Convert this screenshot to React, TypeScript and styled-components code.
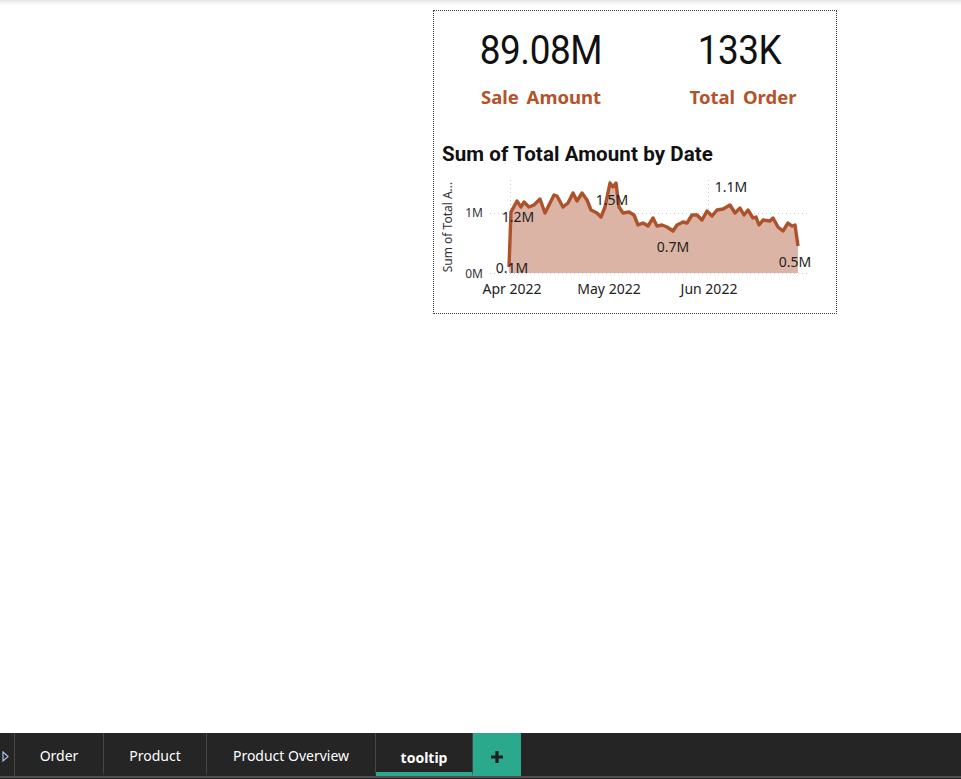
import React from "react";
import styled, { createGlobalStyle } from "styled-components";

const Global = createGlobalStyle`
  html, body { margin: 0; padding: 0; background: #fff; overflow: hidden; }
  #root { height: 100vh; }
`;

const Page = styled.div`
  height: 100vh;
  display: flex;
  flex-direction: column;
`;

const Canvas = styled.main`
  flex: 1;
  background: linear-gradient(#e4e4e4 0px, #f6f6f6 3px, #ffffff 6px);
  padding: 10px 0 0 433px;
`;

const Card = styled.section`
  width: 402px;
  height: 302px;
  border: 1px dotted #3c3c3c;
  display: flex;
  flex-direction: column;
`;

const KpiRow = styled.div`
  display: grid;
  grid-template-columns: 202px 202px;
  margin-left: 6px;
  padding-top: 14px;
`;

const Kpi = styled.div`
  display: flex;
  flex-direction: column;
  align-items: center;
`;

const KpiValue = styled.div<{ $shift?: number }>`
  font-family: Roboto, "DejaVu Sans", sans-serif;
  font-size: 41px;
  line-height: 50px;
  color: #111;
  letter-spacing: -0.5px;
  transform: translateX(${(p) => p.$shift ?? 0}px) scaleX(0.9);
`;

const KpiLabel = styled.div`
  font-family: "Noto Sans", "Open Sans", sans-serif;
  font-weight: 700;
  font-size: 18.5px;
  line-height: 24px;
  margin-top: 10px;
  color: #b3532a;
  word-spacing: 3px;
`;

const ChartTitle = styled.h2`
  margin: 33px 0 0 8px;
  font-family: Roboto, "DejaVu Sans", sans-serif;
  font-weight: 700;
  font-size: 20.5px;
  line-height: 24px;
  color: #111;
  letter-spacing: 0.1px;
`;

const ChartSvg = styled.svg`
  display: block;
  margin-top: 4px;
  font-family: "Noto Sans", "Open Sans", sans-serif;
`;

const Bar = styled.footer`
  height: 46px;
  background: #252525;
  display: flex;
  flex-direction: column;
`;

const TabRow = styled.div`
  height: 43px;
  display: flex;
`;

const BarLine = styled.div`
  height: 2px;
  background: #4f4f4f;
`;

const ArrowCell = styled.div`
  width: 15px;
  border-right: 1px solid #454545;
  display: flex;
  align-items: center;
  padding: 3px 0 0 2px;
  box-sizing: border-box;
`;

const Tab = styled.div<{ $w: number; $active?: boolean }>`
  width: ${(p) => p.$w}px;
  box-sizing: border-box;
  border-right: 1px solid #454545;
  display: flex;
  align-items: center;
  justify-content: center;
  font-family: "Noto Sans", "Open Sans", sans-serif;
  font-size: 14px;
  font-weight: ${(p) => (p.$active ? 700 : 400)};
  color: #fff;
  border-bottom: 4px solid ${(p) => (p.$active ? "#2aa98c" : "transparent")};
  padding-top: ${(p) => (p.$active ? 9 : 5)}px;
`;

const AddTab = styled.div`
  width: 48px;
  background: #2aa98c;
  display: flex;
  align-items: center;
  justify-content: center;
  padding-top: 2px;
  margin-bottom: -2px;
`;

const pts: [number, number][] = [
  [509, 267], [511, 212], [517, 201], [521, 207], [524, 202], [529, 207], [534, 205],
  [540, 199], [545, 213], [549, 205], [554, 195], [557, 196], [563, 207], [568, 203],
  [573, 193], [577, 201], [582, 193], [587, 200], [591, 210], [597, 213], [601, 217],
  [605, 207], [610, 183], [613, 187], [616, 183], [619, 207], [623, 213], [629, 212],
  [634, 215], [638, 225], [643, 223], [648, 226], [653, 218], [657, 226], [662, 225],
  [667, 227], [673, 231], [677, 225], [683, 222], [687, 223], [692, 215], [697, 215],
  [702, 220], [707, 211], [712, 216], [717, 210], [723, 209], [730, 205], [735, 213],
  [740, 208], [744, 215], [748, 210], [753, 218], [756, 217], [759, 225], [763, 220],
  [770, 221], [773, 218], [778, 227], [783, 231], [788, 223], [792, 226], [795, 225],
  [798, 246],
];

const OX = 434;
const OY = 170;

function Chart() {
  const line = pts.map(([x, y], i) => `${i ? "L" : "M"}${x} ${y}`).join(" ");
  const area = `${line} L798 273 L509 273 Z`;
  const labels: [string, number, number][] = [
    ["1.2M", 518, 222],
    ["0.1M", 512, 273],
    ["1.5M", 612, 205],
    ["0.7M", 673, 252],
    ["1.1M", 731, 192],
    ["0.5M", 795, 267],
  ];
  return (
    <ChartSvg width={402} height={130} viewBox={`${OX} ${OY} 402 130`}>
      <g stroke="#c8c8c8" strokeWidth={1} strokeDasharray="1 3">
        <line x1={490} y1={213.5} x2={810} y2={213.5} />
        <line x1={490} y1={273.5} x2={810} y2={273.5} />
        <line x1={510.5} y1={180} x2={510.5} y2={273} />
        <line x1={609.5} y1={180} x2={609.5} y2={273} />
        <line x1={708.5} y1={180} x2={708.5} y2={273} />
      </g>
      <path d={area} fill="#dbb4a5" />
      <path d={line} fill="none" stroke="#ad522b" strokeWidth={3.4} strokeLinejoin="round" />
      <text
        x={452}
        y={227}
        fontSize={12}
        fill="#333"
        textAnchor="middle"
        transform="rotate(-90 452 227)"
      >
        Sum of Total A...
      </text>
      <g fontSize={12} fill="#333" textAnchor="end">
        <text x={483} y={217}>1M</text>
        <text x={483} y={278}>0M</text>
      </g>
      <g fontSize={14} fill="#222" textAnchor="middle">
        <text x={512} y={294}>Apr 2022</text>
        <text x={609} y={294}>May 2022</text>
        <text x={709} y={294}>Jun 2022</text>
      </g>
      <g fontSize={14} fill="#222" textAnchor="middle">
        {labels.map(([t, x, y]) => (
          <text key={t} x={x} y={y}>
            {t}
          </text>
        ))}
      </g>
    </ChartSvg>
  );
}

export default function App() {
  return (
    <Page>
      <Global />
      <Canvas>
        <Card>
          <KpiRow>
            <Kpi>
              <KpiValue>89.08M</KpiValue>
              <KpiLabel>Sale Amount</KpiLabel>
            </Kpi>
            <Kpi>
              <KpiValue $shift={-4}>133K</KpiValue>
              <KpiLabel>Total Order</KpiLabel>
            </Kpi>
          </KpiRow>
          <ChartTitle>Sum of Total Amount by Date</ChartTitle>
          <Chart />
        </Card>
      </Canvas>
      <Bar>
        <TabRow>
          <ArrowCell>
            <svg width="7" height="11" viewBox="0 0 7 11">
              <path d="M1 1 L6 5.5 L1 10 Z" fill="none" stroke="#9fc3e6" strokeWidth="1.2" />
            </svg>
          </ArrowCell>
          <Tab $w={89}>Order</Tab>
          <Tab $w={103}>Product</Tab>
          <Tab $w={169}>Product Overview</Tab>
          <Tab $w={97} $active>
            tooltip
          </Tab>
          <AddTab>
            <svg width="14" height="14" viewBox="0 0 14 14">
              <path d="M7 1 V13 M1 7 H13" stroke="#1e1e1e" strokeWidth="3.2" />
            </svg>
          </AddTab>
        </TabRow>
        <BarLine />
      </Bar>
    </Page>
  );
}
